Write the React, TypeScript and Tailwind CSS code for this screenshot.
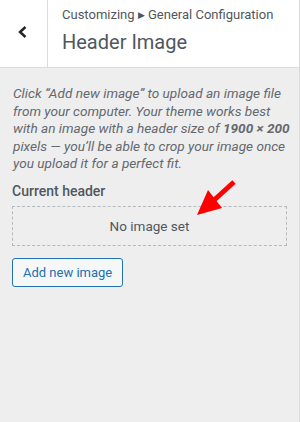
export default function App() {
  return (
    <div
      className="relative w-[300px] h-[422px] bg-[#eeeeee] border-r border-[#dcdcde] overflow-hidden"
      style={{ fontFamily: "Roboto, 'Liberation Sans', sans-serif" }}
    >
      <div className="flex h-[68px] bg-white border-b border-[#dcdcde]">
        <button className="w-[48px] shrink-0 flex items-center justify-center border-r border-[#dcdcde] text-[#1d2327]">
          <svg width="16" height="16" viewBox="0 0 16 16" fill="none" className="-ml-[2px] -mt-[4px]">
            <path d="M10.5 3L5 8l5.5 5" stroke="currentColor" strokeWidth="2.4" />
          </svg>
        </button>
        <div className="pl-[14px] pt-[6px]">
          <div className="text-[13px] leading-[18px] text-[#50575e]">
            Customizing <span className="text-[9px] align-[1px]">▶</span> General Configuration
          </div>
          <h1 className="text-[20px] leading-[28px] text-[#50575e] mt-[4px]">Header Image</h1>
        </div>
      </div>

      <div className="px-[12px] pt-[17px]">
        <p className="-mr-[4px] text-[13.6px] leading-[17.6px] italic text-[#646970] pl-[1px]">
          Click “Add new image” to upload an image file from your computer. Your theme works best with an image with a
          header size of <strong className="font-bold whitespace-nowrap">1900 × 200</strong> pixels — you’ll be able to
          crop your image once you upload it for a perfect fit.
        </p>
        <div className="mt-[9px] text-[14px] leading-[18px] font-medium text-[#50575e]">Current header</div>
        <div className="mt-[6px] h-[40px] w-[275px] border border-dashed border-[#b4b9be] flex items-center justify-center text-[13.5px] text-[#50575e]">
          No image set
        </div>
        <button className="mt-[12px] h-[29px] px-[10px] rounded-[3px] border border-[#2271b1] bg-[#f6f7f7] text-[13px] text-[#2271b1]">
          Add new image
        </button>
      </div>

      <svg className="absolute left-[192px] top-[178px]" width="50" height="42" viewBox="0 0 50 42">
        <path d="M42 4L20 24" stroke="#ff0000" strokeWidth="5" />
        <path d="M5 37L16 12L30 30Z" fill="#ff0000" />
      </svg>
    </div>
  );
}
